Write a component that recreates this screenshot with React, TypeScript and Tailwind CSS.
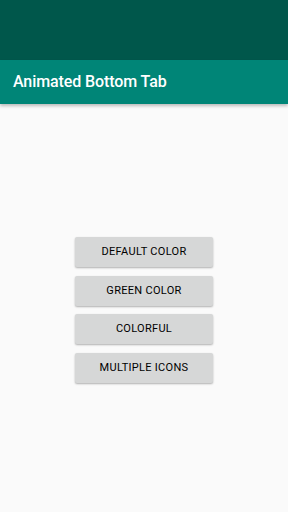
const buttons = ["DEFAULT COLOR", "GREEN COLOR", "COLORFUL", "MULTIPLE ICONS"];

export default function App() {
  return (
    <div className="w-[288px] h-[512px] bg-[#fafafa] flex flex-col" style={{ fontFamily: "Roboto, 'Liberation Sans', sans-serif" }}>
      <div className="h-[60px] bg-[#00574b]" />
      <div className="h-[44px] bg-[#008577] flex items-center px-[13px] shadow-[0_2px_3px_rgba(0,0,0,0.25)] relative">
        <span className="text-white text-[16px] font-medium tracking-[-0.1px]">Animated Bottom Tab</span>
      </div>
      <div className="flex-1 flex flex-col items-center justify-center gap-[8.5px] pt-[4px]">
        {buttons.map((label) => (
          <button
            key={label}
            className="w-[138px] h-[30px] bg-[#d6d7d7] rounded-[2px] shadow-[0_1px_2px_rgba(0,0,0,0.3)] text-[11px] font-normal text-[#000] tracking-[0.3px]"
          >
            {label}
          </button>
        ))}
      </div>
    </div>
  );
}
